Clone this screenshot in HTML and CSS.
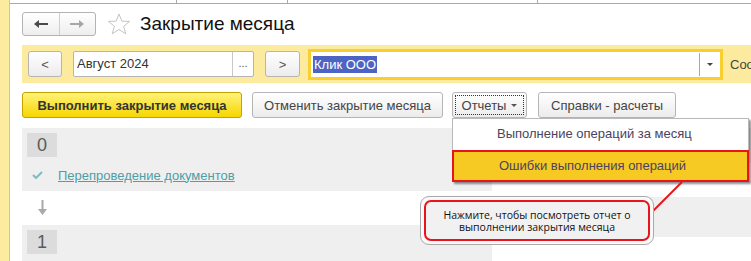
FILE: index.html
```html
<!DOCTYPE html>
<html lang="ru">
<head>
<meta charset="utf-8">
<title>Закрытие месяца</title>
<link rel="stylesheet" href="styles.css">
</head>
<body>
<div class="app">
  <div class="side"></div>
  <div class="main">
    <div class="tabs">
      <div class="tab t1"></div>
      <div class="tab t2"></div>
      <div class="tab t3"></div>
    </div>
    <div class="header">
      <div class="nav">
        <div class="nav-btn">
          <svg width="14" height="8" viewBox="0 0 14 8"><path d="M0 4 L5 0 L5 3 L14 3 L14 5 L5 5 L5 8 Z" fill="#4a4a4a"/></svg>
        </div>
        <div class="nav-btn">
          <svg width="14" height="8" viewBox="0 0 14 8"><path d="M14 4 L9 0 L9 3 L0 3 L0 5 L9 5 L9 8 Z" fill="#a6a6a6"/></svg>
        </div>
      </div>
      <svg class="star" width="24" height="22" viewBox="0 0 24 22"><path d="M12 1 L14.9 8.2 L22.6 8.4 L16.6 13.3 L18.8 20.8 L12 16.5 L5.2 20.8 L7.4 13.3 L1.4 8.4 L9.1 8.2 Z" fill="#fff" stroke="#c4c4c4" stroke-width="1"/></svg>
      <h1 class="title">Закрытие месяца</h1>
    </div>
    <div class="filter">
      <button class="btn small">&lt;</button>
      <div class="date">
        <span class="date-text">Август 2024</span>
        <span class="date-more">...</span>
      </div>
      <button class="btn small next">&gt;</button>
      <div class="company">
        <div class="company-text"><span class="sel">Клик ООО</span></div>
        <div class="company-drop"><span class="tri"></span></div>
      </div>
      <span class="cut">Сообщения</span>
    </div>
    <div class="actions">
      <button class="btn primary">Выполнить закрытие месяца</button>
      <button class="btn cancel">Отменить закрытие месяца</button>
      <button class="btn reports"><span class="focus">Отчеты <span class="tri small-tri"></span></span></button>
      <button class="btn refs">Справки - расчеты</button>
    </div>
    <div class="columns">
      <div class="col">
        <div class="panel">
          <div class="badge">0</div>
          <div class="step">
            <svg class="check" width="11" height="8" viewBox="0 0 11 8"><path d="M1 4 L4 7 L10 1" fill="none" stroke="#7fbcbc" stroke-width="2"/></svg>
            <a class="link" href="#">Перепроведение документов</a>
          </div>
        </div>
        <div class="between">
          <svg width="9" height="15" viewBox="0 0 9 15"><path d="M3.5 0 H5.5 V9 H9 L4.5 15 L0 9 H3.5 Z" fill="#a9a9a9"/></svg>
        </div>
        <div class="panel last">
          <div class="badge">1</div>
        </div>
      </div>
      <div class="col">
        <div class="panel">
          <div class="badge">0</div>
        </div>
        <div class="between"></div>
        <div class="panel last">
          <div class="badge">1</div>
        </div>
      </div>
    </div>
  </div>

  <div class="menu">
    <div class="menu-item">Выполнение операций за месяц</div>
    <div class="menu-item active">Ошибки выполнения операций</div>
  </div>

  <svg class="pointer" width="751" height="261" viewBox="0 0 751 261"><line x1="651" y1="213" x2="682" y2="182" stroke="#e8141c" stroke-width="2"/></svg>

  <div class="callout">
    <div class="callout-inner">Нажмите, чтобы посмотреть отчет о выполнении закрытия месяца</div>
  </div>
</div>
</body>
</html>
```
FILE: styles.css
```css
* { box-sizing: border-box; }
html, body { margin: 0; padding: 0; }
body {
  width: 751px;
  height: 261px;
  overflow: hidden;
  background: #fff;
  font-family: Arial, "Liberation Sans", sans-serif;
  font-size: 13px;
  color: #333;
}
.app { position: relative; display: flex; height: 261px; overflow: hidden; }
.side { flex: none; width: 10px; background: #fcec9f; border-right: 1px solid #d8c684; }
.main { flex: 1; min-width: 0; height: 261px; overflow: hidden; }

.tabs { display: flex; height: 4px; border-bottom: 1px solid #a9a9a9; }
.tab { flex: none; border-right: 1px solid #a9a9a9; }
.t1 { width: 167px; }
.t2 { width: 111px; }
.t3 { width: 250px; }

.header { display: flex; align-items: center; padding: 8px 0 9px 12px; height: 41px; }
.nav {
  display: flex; flex: none; width: 74px; height: 24px;
  border: 1px solid #b3b3b3; border-radius: 3px;
  background: linear-gradient(#ffffff, #eeeeee);
}
.nav-btn { flex: 1; display: flex; align-items: center; justify-content: center; }
.nav-btn + .nav-btn { border-left: 1px solid #cfcfcf; }
.star { margin-left: 11px; flex: none; }
.title { margin: 0 0 0 9px; font-size: 19px; font-weight: normal; color: #111; line-height: 24px; white-space: nowrap; }

.filter {
  display: flex; align-items: center;
  margin-left: 12px; height: 38px; padding-left: 6px;
  background: #fcea9f; white-space: nowrap; overflow: hidden;
}
.btn {
  font-family: Arial, "Liberation Sans", sans-serif;
  font-size: 13px; color: #444;
  border: 1px solid #b5b5b5; border-radius: 3px;
  background: linear-gradient(#ffffff, #ececec);
  padding: 0; height: 26px; flex: none;
}
.small { width: 34px; color: #555; }
.next { width: 35px; margin-left: 11px; }
.date {
  display: flex; flex: none; margin-left: 11px; width: 181px; height: 26px;
  border: 1px solid #b5b5b5; border-radius: 2px; background: #fff;
}
.date-text { flex: 1; padding-left: 3px; line-height: 24px; color: #333; }
.date-more { width: 21px; border-left: 1px solid #c8c8c8; text-align: center; line-height: 22px; color: #555; font-size: 11px; }
.company {
  display: flex; flex: none; margin-left: 8px; width: 415px; height: 31px;
  border: 3px solid #f9cf2f; background: #fff;
}
.company-text { flex: 1; display: flex; align-items: center; padding-left: 2px; }
.sel { background: #4d64c4; color: #fff; line-height: 17px; padding: 0 1px; }
.company-drop { width: 21px; margin: 1px 0; border-left: 1px solid #a8a8a8; display: flex; align-items: center; justify-content: center; }
.tri { display: inline-block; width: 0; height: 0; border-left: 3px solid transparent; border-right: 3px solid transparent; border-top: 3px solid #444; }
.cut { flex: none; margin-left: 7px; color: #444; }

.actions { display: flex; margin: 9px 0 0 12px; }
.primary {
  width: 220px; font-weight: bold; color: #333;
  border-color: #c3a300;
  background: linear-gradient(#fff27a, #f6d600);
}
.cancel { width: 191px; margin-left: 10px; }
.reports { width: 75px; margin-left: 9px; padding: 2px; }
.focus { display: flex; align-items: center; justify-content: center; gap: 5px; height: 100%; border: 1px dotted #333; }
.small-tri { border-top-color: #555; }
.refs { width: 138px; margin-left: 11px; }

.columns { display: flex; gap: 40px; margin: 10px 0 0 12px; }
.col { flex: none; width: 470px; }
.panel { background: #efefef; padding: 5px 5px 6px; }
.badge {
  width: 30px; height: 24px; background: #dcdcdc;
  color: #595959; font-size: 18px; line-height: 24px; text-align: center;
}
.step { display: flex; align-items: center; height: 20px; margin-top: 8px; }
.check { margin-left: 5px; }
.link { margin-left: 15px; color: #4e9ea6; text-decoration: underline; }
.between { height: 34px; padding: 9px 0 0 16px; }
.panel.last { height: 40px; }

.menu {
  position: absolute; left: 452px; top: 118px; width: 297px; height: 64px;
  background: #fff; border: 1px solid #b9b9b9;
  box-shadow: 2px 2px 2px rgba(0,0,0,0.45);
  color: #4a4360;
}
.menu-item { height: 31px; line-height: 30px; padding-left: 44px; }
.menu-item.active {
  margin: 0 -1px; height: 32px; line-height: 28px; padding-left: 45px;
  background: #f7c923; border: 2px solid #e9131b;
}

.pointer { position: absolute; left: 0; top: 0; pointer-events: none; }

.callout {
  position: absolute; left: 420px; top: 196px; width: 234px; height: 49px;
  border: 1px solid #a9a9a9; border-radius: 9px; background: #fafafa; padding: 3px;
}
.callout-inner {
  height: 100%; border: 2px solid #e9131b; border-radius: 7px; background: #f1f1f1;
  display: flex; align-items: center; justify-content: center; text-align: center;
  font-family: "Open Sans", sans-serif; font-size: 10.5px; font-weight: 500; line-height: 12px; color: #111;
  padding: 0 14px;
}
```
